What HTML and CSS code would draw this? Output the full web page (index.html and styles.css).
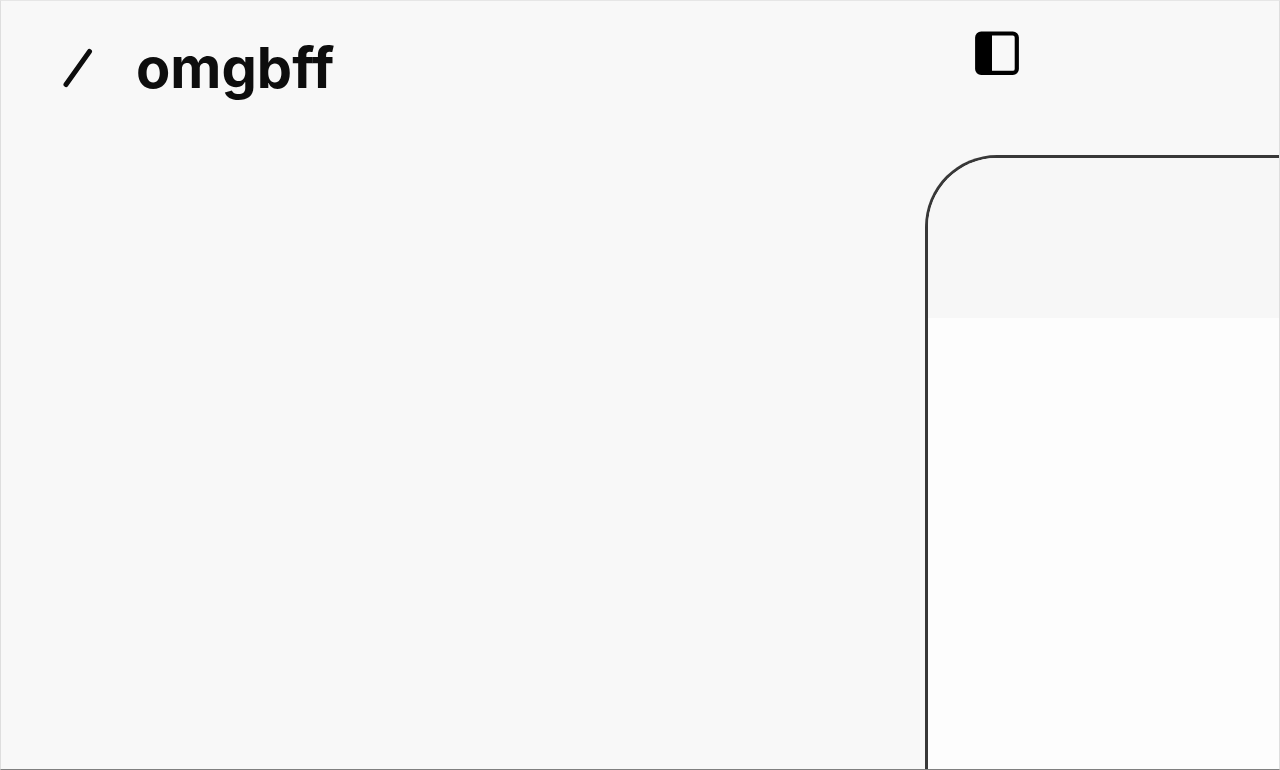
FILE: index.html
```html
<!DOCTYPE html>
<html lang="en">
<head>
<meta charset="utf-8">
<meta name="viewport" content="width=device-width, initial-scale=1">
<title>omgbff</title>
<link rel="stylesheet" href="styles.css">
</head>
<body>
<div class="app">
  <aside class="sidebar">
    <header class="brand">
      <svg class="brand-mark" viewBox="0 0 32 44" aria-hidden="true"><path d="M5 38.5 28.5 5.5" fill="none" stroke="currentColor" stroke-width="5" stroke-linecap="round"/></svg>
      <h1 class="brand-name">omgbff</h1>
    </header>
  </aside>
  <main class="workspace">
    <div class="toolbar">
      <button class="toggle" type="button" aria-label="Toggle sidebar">
        <svg class="toggle-icon" viewBox="0 0 44 44" aria-hidden="true"><rect x="2.2" y="2.5" width="39.6" height="39.4" rx="4" fill="none" stroke="currentColor" stroke-width="4.2"/><path d="M2 6Q2 3 5 3H17V42H5Q2 42 2 39Z" fill="currentColor"/></svg>
      </button>
    </div>
    <section class="panel" aria-label="Content">
      <div class="panel-header"></div>
    </section>
  </main>
</div>
</body>
</html>
```
FILE: styles.css
```css
* {
  box-sizing: border-box;
}

body {
  margin: 0;
  background: #f8f8f8;
  color: #0d0d0d;
  font-family: Inter, "Liberation Sans", sans-serif;
}

.app {
  display: grid;
  grid-template-columns: 924px 1fr;
  min-height: 100vh;
  border: 1px solid #dedede;
  border-top-color: #e6e6e6;
  border-bottom-color: #808080;
}

.brand {
  display: flex;
  align-items: center;
  gap: 43px;
  padding: 33px 60px;
}

.brand-mark {
  width: 32px;
  height: 44px;
}

.brand-name {
  margin: 0;
  font-size: 56px;
  font-weight: 700;
  line-height: 68px;
}

.workspace {
  display: flex;
  flex-direction: column;
}

.toolbar {
  padding: 30px 50px 80px;
}

.toggle {
  display: block;
  padding: 0;
  border: 0;
  background: none;
  color: #000;
}

.toggle-icon {
  display: block;
  width: 44px;
  height: 44px;
}

.panel {
  flex: 1;
  overflow: hidden;
  border: solid #383838;
  border-width: 3px 0 0 3px;
  border-top-left-radius: 72px;
  background: #fdfdfd;
}

.panel-header {
  height: 160px;
  background: #f7f7f7;
}
```
